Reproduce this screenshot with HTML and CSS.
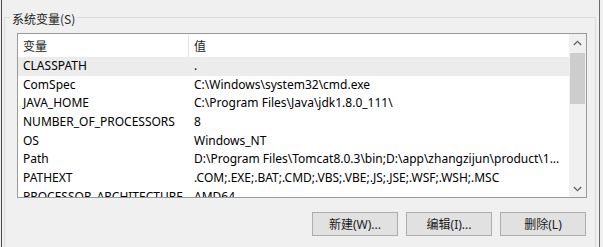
FILE: index.html
```html
<!DOCTYPE html>
<html lang="zh">
<head>
<meta charset="utf-8">
<title>系统变量</title>
<link rel="stylesheet" href="styles.css">
</head>
<body>
<div class="window">
  <div class="group">
    <div class="legend">系统变量(S)</div>
    <div class="listbox">
      <div class="list">
        <div class="header">
          <div class="c1">变量</div>
          <div class="c2">值</div>
        </div>
        <div class="rows">
          <div class="row sel"><div class="c1">CLASSPATH</div><div class="c2">.</div></div>
          <div class="row"><div class="c1">ComSpec</div><div class="c2">C:\Windows\system32\cmd.exe</div></div>
          <div class="row"><div class="c1">JAVA_HOME</div><div class="c2">C:\Program Files\Java\jdk1.8.0_111\</div></div>
          <div class="row"><div class="c1">NUMBER_OF_PROCESSORS</div><div class="c2">8</div></div>
          <div class="row"><div class="c1">OS</div><div class="c2">Windows_NT</div></div>
          <div class="row"><div class="c1">Path</div><div class="c2">D:\Program Files\Tomcat8.0.3\bin;D:\app\zhangzijun\product\1...</div></div>
          <div class="row"><div class="c1">PATHEXT</div><div class="c2">.COM;.EXE;.BAT;.CMD;.VBS;.VBE;.JS;.JSE;.WSF;.WSH;.MSC</div></div>
          <div class="row"><div class="c1">PROCESSOR_ARCHITECTURE</div><div class="c2">AMD64</div></div>
        </div>
      </div>
      <div class="scrollbar">
        <div class="arrow"><svg width="9" height="6" viewBox="0 0 9 6"><path d="M0.8 5 L4.5 1.3 L8.2 5" fill="none" stroke="#606060" stroke-width="1.3"/></svg></div>
        <div class="track"><div class="thumb"></div></div>
        <div class="arrow"><svg width="9" height="6" viewBox="0 0 9 6"><path d="M0.8 1 L4.5 4.7 L8.2 1" fill="none" stroke="#606060" stroke-width="1.3"/></svg></div>
      </div>
    </div>
    <div class="buttons">
      <button class="btn">新建(W)...</button>
      <button class="btn">编辑(I)...</button>
      <button class="btn">删除(L)</button>
    </div>
  </div>
</div>
</body>
</html>
```

FILE: styles.css
```css
html, body {
  margin: 0;
  padding: 0;
  background: #f0f0f0;
  height: 247px;
  overflow: hidden;
}
body {
  font-family: "Noto Sans", "Noto Sans CJK SC", sans-serif;
  font-size: 12px;
  color: #000;
}
.window {
  margin-left: 1px;
  width: 597px;
  height: 247px;
  border-left: 1px solid #4a4a4a;
  border-right: 1px solid #6a6a6a;
  display: flex;
  flex-direction: column;
}
.group {
  margin: 17px 3px 0 2px;
  flex: 1;
  border: 1px solid #dcdcdc;
  border-bottom: none;
  display: flex;
  flex-direction: column;
}
.legend {
  margin: -7px 0 0 5px;
  padding: 0 2px;
  align-self: flex-start;
  background: #f0f0f0;
  line-height: 15px;
  font-family: "Noto Sans CJK SC", sans-serif;
  color: #222;
}
.listbox {
  margin: 7px 8px 0 12px;
  height: 163px;
  border: 1px solid #9a9a9a;
  background: #fff;
  display: flex;
}
.list {
  flex: 1;
  overflow: hidden;
  display: flex;
  flex-direction: column;
}
.header {
  height: 23px;
  flex: none;
  display: flex;
  align-items: stretch;
}
.header .c1 {
  border-right: 1px solid #e5e5e5;
}
.header .c1, .header .c2 {
  display: flex;
  align-items: center;
  font-family: "Noto Sans CJK SC", sans-serif;
  color: #1a1a1a;
}
.c1 {
  width: 165px;
  padding-left: 5px;
  flex: none;
  white-space: nowrap;
  overflow: hidden;
}
.c2 {
  padding-left: 5px;
  white-space: nowrap;
  overflow: hidden;
  flex: 1;
}
.rows {
  flex: none;
}
.row {
  height: 18.67px;
  line-height: 18.67px;
  display: flex;
}
.row .c1 {
  width: 165px;
  margin-right: 1px;
}
.row.sel {
  background: #ececec;
}
.scrollbar {
  width: 17px;
  flex: none;
  background: #f0f0f0;
  display: flex;
  flex-direction: column;
}
.arrow {
  height: 17px;
  flex: none;
  display: flex;
  align-items: center;
  justify-content: center;
}
.track {
  flex: 1;
  padding: 2px 1px 0 1px;
}
.thumb {
  height: 51px;
  background: #cdcdcd;
}
.buttons {
  margin: 14px 9px 0 0;
  display: flex;
  justify-content: flex-end;
  gap: 8px;
}
.btn {
  width: 86px;
  height: 24px;
  margin: 0;
  padding: 0;
  border: 1px solid #adadad;
  background: #e1e1e1;
  font-family: "Noto Sans", "Noto Sans CJK SC", sans-serif;
  font-size: 12px;
  color: #1a1a1a;
}
```
